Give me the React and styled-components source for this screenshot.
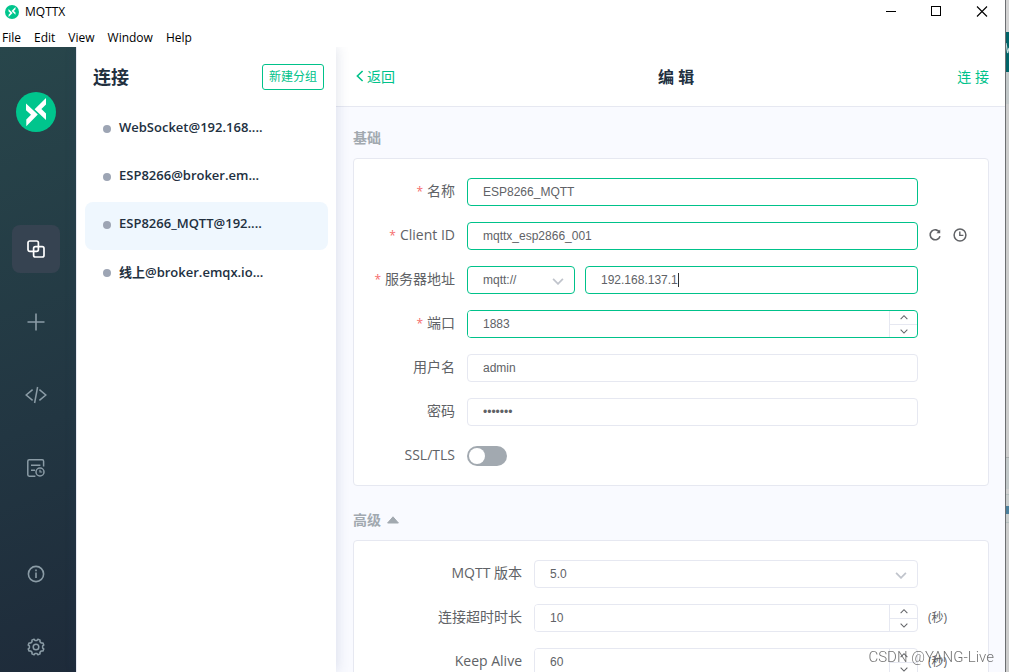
import React, { useMemo, useState } from 'react'
import styled, { createGlobalStyle } from 'styled-components'

const GREEN = '#00c28a'
const BORDER = '#e6e8f1'
const TEXT = '#606266'
const HEADING = '#22303f'
const MUTED = '#a2a9b0'

const UI_FONT = '"Open Sans", "Noto Sans CJK SC", sans-serif'
const INPUT_FONT = '"Liberation Sans", "Noto Sans CJK SC", sans-serif'

const menus = ['File', 'Edit', 'View', 'Window', 'Help']

const connections = [
    { id: 1, name: 'WebSocket@192.168....' },
    { id: 2, name: 'ESP8266@broker.em...' },
    { id: 3, name: 'ESP8266_MQTT@192....' },
    { id: 4, name: '线上@broker.emqx.io...' },
]

const LogoIcon = ({ size }) => (
    <svg width={size} height={size} viewBox="0 0 40 40" aria-hidden="true">
        <circle cx="20" cy="20" r="20" fill="#00c58d" />
        <path d="M10 11.5L21.8 22.6L10.3 34.3V27.6L15 22.8L10 18.2Z" fill="#fff" />
        <path d="M30 6V12.4L25.4 17L30 21.6V28L18.6 17.2Z" fill="#fff" />
    </svg>
)

const ConnectionsIcon = () => (
    <svg width="18" height="18" viewBox="0 0 18 18" fill="none" stroke="currentColor" strokeWidth="1.7">
        <rect x="1" y="1" width="10.4" height="10.4" rx="1.8" />
        <rect x="6.6" y="6.6" width="10.4" height="10.4" rx="1.8" />
    </svg>
)

const PlusIcon = () => (
    <svg width="18" height="18" viewBox="0 0 18 18" fill="none" stroke="currentColor" strokeWidth="1.6">
        <path d="M9 0.5V17.5M0.5 9H17.5" />
    </svg>
)

const CodeIcon = () => (
    <svg width="22" height="18" viewBox="0 0 22 18" fill="none" stroke="currentColor" strokeWidth="1.5">
        <path d="M7.6 3.6L1.2 9L7.6 14.4M14.4 3.6L20.8 9L14.4 14.4M12.6 1L9.6 17" />
    </svg>
)

const LogIcon = () => (
    <svg width="18" height="18" viewBox="0 0 18 18" fill="none" stroke="currentColor" strokeWidth="1.5">
        <path d="M16.6 7.6V2.2Q16.6 0.8 15.2 0.8H2.2Q0.8 0.8 0.8 2.2V15.8Q0.8 17.2 2.2 17.2H8.4" />
        <path d="M4 6.2H13.4M4 11.2H8" />
        <circle cx="13" cy="13" r="4" />
        <path d="M13 10.8V13H15.2" strokeWidth="1.2" />
    </svg>
)

const InfoIcon = () => (
    <svg width="18" height="18" viewBox="0 0 18 18" fill="none" stroke="currentColor" strokeWidth="1.6">
        <circle cx="9" cy="9" r="7.6" />
        <path d="M9 7.6V13M9 4.6V6.2" strokeWidth="1.6" />
    </svg>
)

const GearIcon = () => (
    <svg width="18" height="18" viewBox="0 0 18 18" fill="none" stroke="currentColor" strokeWidth="1.5" strokeLinejoin="round">
        <path d="M7.1 1.2L7.9 2.4H10.1L10.9 1.2L13.1 2.1L12.9 3.6L14.4 5.1L15.9 4.9L16.8 7.1L15.6 7.9V10.1L16.8 10.9L15.9 13.1L14.4 12.9L12.9 14.4L13.1 15.9L10.9 16.8L10.1 15.6H7.9L7.1 16.8L4.9 15.9L5.1 14.4L3.6 12.9L2.1 13.1L1.2 10.9L2.4 10.1V7.9L1.2 7.1L2.1 4.9L3.6 5.1L5.1 3.6L4.9 2.1Z" />
        <circle cx="9" cy="9" r="2.8" />
    </svg>
)

const ChevronIcon = ({ dir = 'down', width = 10, stroke = 1.3 }) => (
    <svg width={width} height={width / 2 + 1} viewBox="0 0 10 6" fill="none" stroke="currentColor" strokeWidth={stroke}>
        <path d={dir === 'down' ? 'M0.8 0.8L5 5L9.2 0.8' : 'M0.8 5L5 0.8L9.2 5'} />
    </svg>
)

const BackIcon = () => (
    <svg width="8" height="12" viewBox="0 0 8 12" fill="none" stroke="currentColor" strokeWidth="1.6">
        <path d="M6.6 1L1.4 6L6.6 11" />
    </svg>
)

const RefreshIcon = () => (
    <svg width="14" height="14" viewBox="0 0 14 14" fill="none" stroke="currentColor" strokeWidth="1.6">
        <path d="M11.6 4.4A5 5 0 1 0 12 8.2" />
        <path d="M12.2 1.4V5.2H8.4Z" fill="currentColor" stroke="none" />
    </svg>
)

const ClockIcon = () => (
    <svg width="14" height="14" viewBox="0 0 14 14" fill="none" stroke="currentColor" strokeWidth="1.5">
        <circle cx="7" cy="7" r="5.9" />
        <path d="M6.8 3.6V7.4H10.4" strokeWidth="1.4" />
    </svg>
)

const navItems = [
    { id: 'connections', label: 'Connections', icon: <ConnectionsIcon /> },
    { id: 'new', label: 'New', icon: <PlusIcon /> },
    { id: 'script', label: 'Script', icon: <CodeIcon /> },
    { id: 'log', label: 'Log', icon: <LogIcon /> },
]

const bottomItems = [
    { id: 'about', label: 'About', icon: <InfoIcon /> },
    { id: 'settings', label: 'Settings', icon: <GearIcon /> },
]

const NumberField = ({ id, value, onChange, active }) => (
    <NumberBox $active={active}>
        <input id={id} type="number" value={value} onChange={e => onChange(Number(e.target.value))} />
        <Steps>
            <button type="button" aria-label="+" onClick={() => onChange(value + 1)}>
                <ChevronIcon dir="up" width={8} />
            </button>
            <button type="button" aria-label="-" onClick={() => onChange(value - 1)}>
                <ChevronIcon width={8} />
            </button>
        </Steps>
    </NumberBox>
)

// Text input with a steady caret after the last character
const CaretInput = ({ value, ...props }) => {
    const textWidth = useMemo(() => {
        const ctx = document.createElement('canvas').getContext('2d')
        ctx.font = `12px ${INPUT_FONT}`
        return Math.round(ctx.measureText(value).width)
    }, [value])

    return (
        <CaretBox>
            <Input value={value} {...props} />
            <Caret style={{ left: 16 + textWidth }} />
        </CaretBox>
    )
}

const App = () => {
    const [current, setCurrent] = useState(3)
    const [page, setPage] = useState('connections')
    const [showAdvanced, setShowAdvanced] = useState(true)
    const [record, setRecord] = useState({
        name: 'ESP8266_MQTT',
        clientId: 'mqttx_esp2866_001',
        protocol: 'mqtt://',
        host: '192.168.137.1',
        port: 1883,
        username: 'admin',
        password: '1234567',
        ssl: false,
        version: '5.0',
        timeout: 10,
        keepalive: 60,
    })

    const setField = (name, value) => {
        setRecord({ ...record, [name]: value })
    }

    const onChange = (e) => {
        setField(e.target.name, e.target.value)
    }

    const refreshClientId = () => {
        setField('clientId', 'mqttx_' + Math.random().toString(16).slice(2, 10))
    }

    const renderNav = (item) => (
        <NavButton
            key={item.id}
            aria-label={item.label}
            $active={page === item.id}
            onClick={() => setPage(item.id)}
        >
            {item.icon}
        </NavButton>
    )

    return (
        <Desktop>
            <GlobalStyle />
            <Window>
                <TitleBar>
                    <AppName>
                        <LogoIcon size={14} />
                        <span>MQTTX</span>
                    </AppName>
                    <WindowButton aria-label="Minimize">
                        <svg width="12" height="12" viewBox="0 0 12 12"><path d="M2 5.5H12" stroke="#000" /></svg>
                    </WindowButton>
                    <WindowButton aria-label="Maximize">
                        <svg width="12" height="12" viewBox="0 0 12 12"><rect x="1.5" y="0.5" width="9" height="9" fill="none" stroke="#000" /></svg>
                    </WindowButton>
                    <WindowButton aria-label="Close">
                        <svg width="12" height="12" viewBox="0 0 12 12"><path d="M1 0.5L11 10.5M11 0.5L1 10.5" stroke="#000" strokeWidth="1.1" /></svg>
                    </WindowButton>
                </TitleBar>
                <MenuBar>
                    {menus.map(menu => <button key={menu}>{menu}</button>)}
                </MenuBar>

                <Body>
                    <Sidebar>
                        <LogoIcon size={40} />
                        <NavGroup>{navItems.map(renderNav)}</NavGroup>
                        <NavGroup $bottom>{bottomItems.map(renderNav)}</NavGroup>
                    </Sidebar>

                    <ListPanel>
                        <ListHeader>
                            <h1>连接</h1>
                            <GroupButton>新建分组</GroupButton>
                        </ListHeader>
                        {connections.map(item => (
                            <Connection
                                key={item.id}
                                $active={item.id === current}
                                onClick={() => setCurrent(item.id)}
                            >
                                {item.name}
                            </Connection>
                        ))}
                    </ListPanel>

                    <Main>
                        <Topbar>
                            <TextButton>
                                <BackIcon />
                                返回
                            </TextButton>
                            <h2>编 辑</h2>
                            <TextButton>连 接</TextButton>
                        </Topbar>

                        <Content>
                            <SectionTitle>基础</SectionTitle>
                            <Card>
                                <Row>
                                    <Label htmlFor="name" $required>名称</Label>
                                    <Input id="name" name="name" value={record.name} onChange={onChange} $active />
                                </Row>
                                <Row>
                                    <Label htmlFor="clientId" $required>Client ID</Label>
                                    <Input id="clientId" name="clientId" value={record.clientId} onChange={onChange} $active />
                                    <Extra>
                                        <IconButton aria-label="Refresh" onClick={refreshClientId}><RefreshIcon /></IconButton>
                                        <IconButton aria-label="Timestamp"><ClockIcon /></IconButton>
                                    </Extra>
                                </Row>
                                <Row>
                                    <Label htmlFor="host" $required>服务器地址</Label>
                                    <HostFields>
                                        <SelectBox $active>
                                            <select name="protocol" aria-label="Protocol" value={record.protocol} onChange={onChange}>
                                                <option>mqtt://</option>
                                                <option>mqtts://</option>
                                                <option>ws://</option>
                                                <option>wss://</option>
                                            </select>
                                            <ChevronIcon width={12} stroke={1.5} />
                                        </SelectBox>
                                        <CaretInput id="host" name="host" value={record.host} onChange={onChange} $active />
                                    </HostFields>
                                </Row>
                                <Row>
                                    <Label htmlFor="port" $required>端口</Label>
                                    <NumberField id="port" value={record.port} onChange={v => setField('port', v)} active />
                                </Row>
                                <Row>
                                    <Label htmlFor="username">用户名</Label>
                                    <Input id="username" name="username" value={record.username} onChange={onChange} />
                                </Row>
                                <Row>
                                    <Label htmlFor="password">密码</Label>
                                    <Input id="password" name="password" type="password" value={record.password} onChange={onChange} />
                                </Row>
                                <Row>
                                    <Label htmlFor="ssl">SSL/TLS</Label>
                                    <Switch
                                        id="ssl"
                                        type="checkbox"
                                        role="switch"
                                        checked={record.ssl}
                                        onChange={e => setField('ssl', e.target.checked)}
                                    />
                                </Row>
                            </Card>

                            <SectionTitle>
                                高级
                                <CollapseButton aria-label="Toggle" onClick={() => setShowAdvanced(!showAdvanced)}>
                                    <svg width="12" height="8" viewBox="0 0 12 8"><path d="M6 0.8L11.4 7H0.6Z" fill="currentColor" stroke="currentColor" strokeLinejoin="round" /></svg>
                                </CollapseButton>
                            </SectionTitle>
                            {showAdvanced && (
                                <Card>
                                    <Row $wide>
                                        <Label htmlFor="version">MQTT 版本</Label>
                                        <SelectBox>
                                            <select id="version" name="version" value={record.version} onChange={onChange}>
                                                <option>3.1</option>
                                                <option>3.1.1</option>
                                                <option>5.0</option>
                                            </select>
                                            <ChevronIcon width={12} stroke={1.5} />
                                        </SelectBox>
                                    </Row>
                                    <Row $wide>
                                        <Label htmlFor="timeout">连接超时时长</Label>
                                        <NumberField id="timeout" value={record.timeout} onChange={v => setField('timeout', v)} />
                                        <Extra>(秒)</Extra>
                                    </Row>
                                    <Row $wide>
                                        <Label htmlFor="keepalive">Keep Alive</Label>
                                        <NumberField id="keepalive" value={record.keepalive} onChange={v => setField('keepalive', v)} />
                                        <Extra>(秒)</Extra>
                                    </Row>
                                </Card>
                            )}
                        </Content>
                    </Main>
                </Body>
            </Window>
            <Behind>
                <svg width="3" height="72" viewBox="0 0 3 72" fill="none" stroke="#c3dcdc" strokeWidth="1.2">
                    <path d="M0 43L1.6 53L3 48" />
                </svg>
            </Behind>
            <Watermark>CSDN @YANG-Live</Watermark>
        </Desktop>
    )
}

export default App


const GlobalStyle = createGlobalStyle`
    *{
        box-sizing: border-box;
    }
    body{
        margin: 0;
        font-family: ${UI_FONT};
        font-size: 14px;
        color: ${TEXT};
    }
    h1,h2,h3{
        margin: 0;
    }
    button{
        padding: 0;
        border: none;
        background: none;
        color: inherit;
        font: inherit;
        cursor: pointer;
    }
    svg{
        display: block;
        flex-shrink: 0;
    }
`

const Desktop = styled.div`
    display: flex;
    height: 100vh;
    overflow: hidden;
`

const Window = styled.div`
    flex: 1;
    min-width: 0;
    display: flex;
    flex-direction: column;
    background-color: #fff;
    border-right: 1px solid #6d6f72;
`

/* strip of the windows lying behind */
const Behind = styled.div`
    width: 3px;
    background: linear-gradient(
        #d4d4d4 0 32px,
        #006468 32px 72px,
        #c2c8c9 72px 104px,
        #cdcdcd 104px 457px,
        #a9adae 457px 458px,
        #c2c8c9 458px 489px,
        #cfcfcf 489px 494px,
        #b4bfbf 494px 495px,
        #c8cccc 495px 506px,
        #4a7f9c 506px 514px,
        #c8cccc 514px 522px,
        #b4bfbf 522px 523px,
        #cdcdcd 523px
    );
`

const TitleBar = styled.header`
    display: flex;
    height: 23px;
    color: #000;
`

const AppName = styled.div`
    flex: 1;
    display: flex;
    align-items: center;
    gap: 6px;
    padding-left: 5px;
    font-size: 12px;
`

const WindowButton = styled.button`
    width: 46px;
    display: flex;
    align-items: center;
    justify-content: center;
`

const MenuBar = styled.nav`
    display: flex;
    gap: 13px;
    height: 24px;
    padding: 4px 2px 0;
    font-size: 12px;
    color: #000;
`

const Body = styled.div`
    flex: 1;
    min-height: 0;
    display: flex;
    overflow: hidden;
`

const Sidebar = styled.aside`
    width: 76px;
    display: flex;
    flex-direction: column;
    align-items: center;
    padding: 45px 4px 1px 0;
    background: linear-gradient(160deg, #28464b, #223642 60%, #1e2b3a);
`

const NavGroup = styled.nav`
    display: flex;
    flex-direction: column;
    gap: 25px;
    margin-top: ${({ $bottom }) => $bottom ? 'auto' : '93px'};
`

const NavButton = styled.button`
    width: 48px;
    height: 48px;
    display: flex;
    align-items: center;
    justify-content: center;
    border-radius: 8px;
    color: ${({ $active }) => $active ? '#fff' : '#8b9ca6'};
    background-color: ${({ $active }) => $active ? '#364351' : 'transparent'};
`

const ListPanel = styled.section`
    position: relative;
    z-index: 1;
    width: 260px;
    padding: 0 8px;
    background-color: #fff;
    border-left: 1px solid ${BORDER};
    box-shadow: 1px 0 12px rgba(60, 80, 130, 0.16);
`

const ListHeader = styled.div`
    display: flex;
    align-items: center;
    justify-content: space-between;
    height: 59px;
    padding: 0 4px 0 8px;

    h1{
        padding-bottom: 2px;
        font-size: 18px;
        font-weight: 700;
        color: ${HEADING};
    }
`

const GroupButton = styled.button`
    height: 26px;
    padding: 0 6px 2px;
    border: 1px solid ${GREEN};
    border-radius: 3px;
    font-size: 12px;
    color: ${GREEN};
`

const Connection = styled.button`
    width: 100%;
    height: 48px;
    display: flex;
    align-items: center;
    gap: 8px;
    padding: 0 18px 6px;
    border-radius: 8px;
    font-size: 13px;
    font-weight: 600;
    color: ${HEADING};
    background-color: ${({ $active }) => $active ? '#eff7fe' : 'transparent'};

    &::before{
        content: '';
        width: 8px;
        height: 8px;
        margin-top: 4px;
        border-radius: 50%;
        background-color: #9da5b4;
    }
`

const Main = styled.main`
    flex: 1;
    min-width: 0;
    display: flex;
    flex-direction: column;
    background-color: #f9faff;
`

const Topbar = styled.div`
    display: flex;
    align-items: center;
    justify-content: space-between;
    flex-shrink: 0;
    height: 60px;
    padding: 0 16px 2px 20px;
    background-color: #fff;
    border-bottom: 1px solid ${BORDER};

    h2{
        font-size: 16px;
        font-weight: 700;
        color: ${HEADING};
    }
`

const TextButton = styled.button`
    display: flex;
    align-items: center;
    gap: 3px;
    color: ${GREEN};
`

const Content = styled.div`
    flex: 1;
    overflow-y: auto;
    scrollbar-width: none;
    padding: 21px 16px 16px 17px;
`

const SectionTitle = styled.h3`
    display: flex;
    align-items: center;
    gap: 6px;
    margin-bottom: 11px;
    font-size: 14px;
    line-height: 19px;
    font-weight: 700;
    color: ${MUTED};
`

const CollapseButton = styled.button`
    color: ${MUTED};
`

const Card = styled.div`
    display: flex;
    flex-direction: column;
    gap: 16px;
    margin-bottom: 24px;
    padding: 19px 0 15px;
    background-color: #fff;
    border: 1px solid ${BORDER};
    border-radius: 4px;
`

const Row = styled.div`
    display: grid;
    grid-template-columns: ${({ $wide }) => $wide ? '180px' : '113px'} minmax(0, 1fr) 70px;
    align-items: center;
    min-height: 28px;
`

const Label = styled.label`
    padding: 0 12px 2px 0;
    line-height: 24px;
    text-align: right;
    white-space: nowrap;

    &::before{
        content: ${({ $required }) => $required ? "'*'" : 'none'};
        margin-right: 4px;
        font-size: 12px;
        color: #f56c6c;
    }
`

const Input = styled.input`
    width: 100%;
    height: 28px;
    padding: 0 15px;
    border: 1px solid ${({ $active }) => $active ? GREEN : BORDER};
    border-radius: 4px;
    background-color: #fff;
    font-family: ${INPUT_FONT};
    font-size: 12px;
    color: ${TEXT};
    outline: none;
`

const CaretBox = styled.div`
    position: relative;

    input{
        display: block;
        caret-color: transparent;
    }
`

const Caret = styled.span`
    position: absolute;
    top: 7px;
    width: 1px;
    height: 14px;
    background-color: #303133;
    pointer-events: none;
`

const HostFields = styled.div`
    display: grid;
    grid-template-columns: 108px minmax(0, 1fr);
    gap: 10px;
`

const SelectBox = styled.div`
    position: relative;

    select{
        appearance: none;
        display: block;
        width: 100%;
        height: 28px;
        padding: 0 30px 0 15px;
        border: 1px solid ${({ $active }) => $active ? GREEN : BORDER};
        border-radius: 4px;
        background-color: #fff;
        font-family: ${INPUT_FONT};
        font-size: 12px;
        color: ${TEXT};
        outline: none;
    }
    svg{
        position: absolute;
        top: 12px;
        right: 11px;
        color: #c0c4cc;
        pointer-events: none;
    }
`

const NumberBox = styled.div`
    display: flex;
    height: 28px;
    border: 1px solid ${({ $active }) => $active ? GREEN : BORDER};
    border-radius: 4px;
    overflow: hidden;

    input{
        flex: 1;
        min-width: 0;
        padding: 0 15px;
        border: none;
        appearance: textfield;
        font-family: ${INPUT_FONT};
        font-size: 12px;
        color: ${TEXT};
        outline: none;
    }
`

const Steps = styled.div`
    width: 28px;
    display: grid;
    grid-template-rows: 1fr 1fr;
    border-left: 1px solid ${BORDER};

    button{
        display: flex;
        align-items: center;
        justify-content: center;
    }
    button + button{
        border-top: 1px solid ${BORDER};
    }
`

const Extra = styled.div`
    display: flex;
    align-items: center;
    gap: 11px;
    padding: 0 0 2px 10px;
    font-size: 12px;
`

const IconButton = styled.button`
    color: ${TEXT};
`

const Switch = styled.input`
    appearance: none;
    width: 40px;
    height: 20px;
    margin: 0;
    padding: 2px;
    border-radius: 10px;
    background-color: ${({ checked }) => checked ? GREEN : '#a2a9b0'};
    cursor: pointer;

    &::before{
        content: '';
        display: block;
        width: 16px;
        height: 16px;
        margin-left: ${({ checked }) => checked ? '20px' : '0'};
        border-radius: 50%;
        background-color: #fff;
    }
`

const Watermark = styled.div`
    position: fixed;
    right: 15px;
    bottom: 5px;
    font-family: Roboto, sans-serif;
    font-size: 15px;
    font-weight: 300;
    line-height: 20px;
    color: rgba(90, 90, 90, 0.85);
    pointer-events: none;
`
